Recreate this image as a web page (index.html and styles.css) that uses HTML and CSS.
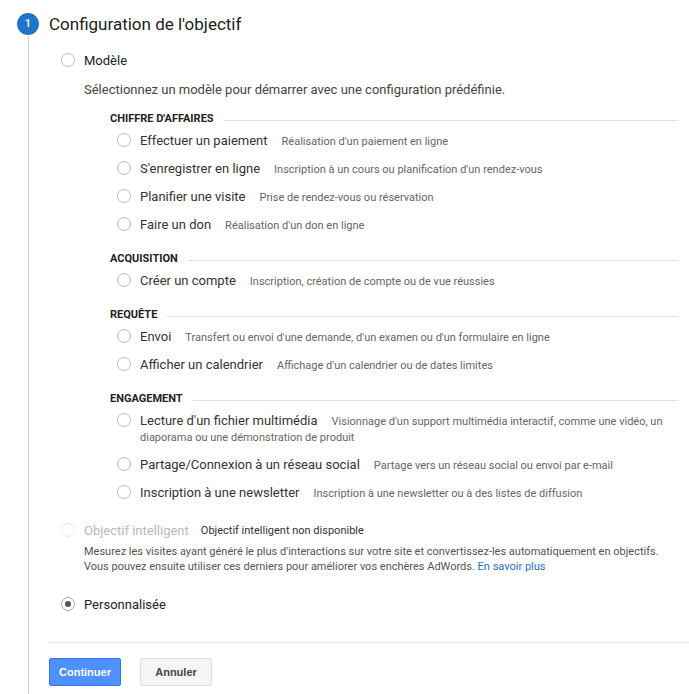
FILE: index.html
```html
<!DOCTYPE html>
<html lang="fr">
<head>
<meta charset="utf-8">
<title>Configuration de l'objectif</title>
<link rel="stylesheet" href="styles.css">
</head>
<body>
<div class="step">
  <div class="rail">
    <div class="badge">1</div>
    <div class="line"></div>
  </div>
  <div class="content">
    <h1 class="title">Configuration de l'objectif</h1>

    <div class="option top">
      <span class="radio"></span>
      <span class="opt-label">Modèle</span>
    </div>
    <p class="intro">Sélectionnez un modèle pour démarrer avec une configuration prédéfinie.</p>

    <div class="groups">
      <div class="group-head"><span>CHIFFRE D'AFFAIRES</span></div>
      <div class="item"><span class="radio"></span><p class="item-text"><span class="name">Effectuer un paiement</span><span class="desc">Réalisation d'un paiement en ligne</span></p></div>
      <div class="item"><span class="radio"></span><p class="item-text"><span class="name">S'enregistrer en ligne</span><span class="desc">Inscription à un cours ou planification d'un rendez-vous</span></p></div>
      <div class="item"><span class="radio"></span><p class="item-text"><span class="name">Planifier une visite</span><span class="desc">Prise de rendez-vous ou réservation</span></p></div>
      <div class="item"><span class="radio"></span><p class="item-text"><span class="name">Faire un don</span><span class="desc">Réalisation d'un don en ligne</span></p></div>

      <div class="group-head"><span>ACQUISITION</span></div>
      <div class="item"><span class="radio"></span><p class="item-text"><span class="name">Créer un compte</span><span class="desc">Inscription, création de compte ou de vue réussies</span></p></div>

      <div class="group-head"><span>REQUÊTE</span></div>
      <div class="item"><span class="radio"></span><p class="item-text"><span class="name">Envoi</span><span class="desc">Transfert ou envoi d'une demande, d'un examen ou d'un formulaire en ligne</span></p></div>
      <div class="item"><span class="radio"></span><p class="item-text"><span class="name">Afficher un calendrier</span><span class="desc">Affichage d'un calendrier ou de dates limites</span></p></div>

      <div class="group-head"><span>ENGAGEMENT</span></div>
      <div class="item"><span class="radio"></span><p class="item-text"><span class="name">Lecture d'un fichier multimédia</span><span class="desc">Visionnage d'un support multimédia interactif, comme une vidéo, un diaporama ou une démonstration de produit</span></p></div>
      <div class="item"><span class="radio"></span><p class="item-text"><span class="name">Partage/Connexion à un réseau social</span><span class="desc">Partage vers un réseau social ou envoi par e-mail</span></p></div>
      <div class="item"><span class="radio"></span><p class="item-text"><span class="name">Inscription à une newsletter</span><span class="desc">Inscription à une newsletter ou à des listes de diffusion</span></p></div>
    </div>

    <div class="option smart">
      <span class="radio disabled"></span>
      <span class="opt-label muted">Objectif intelligent</span>
      <span class="note">Objectif intelligent non disponible</span>
    </div>
    <p class="smart-desc">Mesurez les visites ayant généré le plus d'interactions sur votre site et convertissez-les automatiquement en objectifs. Vous pouvez ensuite utiliser ces derniers pour améliorer vos enchères AdWords. <a class="link" href="#">En savoir plus</a></p>

    <div class="option custom">
      <span class="radio checked"></span>
      <span class="opt-label">Personnalisée</span>
    </div>

    <div class="actions">
      <button class="btn primary" type="button">Continuer</button>
      <button class="btn secondary" type="button">Annuler</button>
    </div>
  </div>
</div>
</body>
</html>
```

FILE: styles.css
```css
* { box-sizing: border-box; }

html, body {
  margin: 0;
  padding: 0;
  background: #fff;
  height: 100%;
}

body {
  font-family: Roboto, "Liberation Sans", Arial, sans-serif;
  color: #333;
  overflow: hidden;
}

.step {
  display: flex;
  padding-left: 17px;
  padding-top: 13px;
  min-height: 100%;
}

.rail {
  width: 22px;
  display: flex;
  flex-direction: column;
  align-items: center;
  flex: none;
}

.badge {
  width: 22px;
  height: 22px;
  border-radius: 50%;
  background: #1f76c6;
  color: #fff;
  font-size: 11px;
  line-height: 22px;
  text-align: center;
  font-weight: 500;
}

.line {
  flex: 1;
  width: 1px;
  background: #cfcfcf;
  margin-top: 1px;
}

.content {
  flex: 1;
  margin-left: 10px;
}

.title {
  margin: 0;
  font-size: 17px;
  line-height: 22px;
  font-weight: 400;
  color: #222;
}

.option {
  display: flex;
  align-items: center;
  margin-left: 12px;
  height: 20px;
}

.option.top { margin-top: 15px; }

.radio {
  width: 14px;
  height: 14px;
  border: 1px solid #bdbdbd;
  border-radius: 50%;
  background: #fff;
  flex: none;
  position: relative;
}

.radio.disabled { border-color: #ececec; }

.radio.checked { border-color: #a8a8a8; }
.radio.checked::after {
  content: "";
  position: absolute;
  left: 3px;
  top: 3px;
  width: 6px;
  height: 6px;
  border-radius: 50%;
  background: #555;
}

.opt-label {
  margin-left: 9px;
  font-size: 13px;
  color: #222;
}

.opt-label.muted { color: #b8b8b8; }

.note {
  margin-left: 12px;
  font-size: 11px;
  color: #333;
}

.intro {
  margin: 12px 0 0 35px;
  font-size: 13px;
  line-height: 16px;
  color: #444;
}

.groups {
  margin-left: 61px;
  margin-right: 11px;
}

.group-head {
  display: flex;
  align-items: center;
  margin-top: 12px;
  height: 16px;
  font-size: 11px;
  font-weight: 700;
  color: #222;
}

.group-head::after {
  content: "";
  flex: 1;
  height: 1px;
  background: #e2e2e2;
  margin-left: 10px;
  margin-top: 5px;
}

.item {
  display: flex;
  align-items: flex-start;
  padding: 8px 0 4px 7px;
}

.item .radio { margin-top: -1px; }

.item-text {
  margin: 0 0 0 9px;
  font-size: 11px;
  line-height: 16px;
}

.name {
  font-size: 13px;
  line-height: 14px;
  color: #333;
  margin-right: 14px;
}

.desc {
  font-size: 11px;
  line-height: 14px;
  color: #666;
}

.option.smart { margin-top: 14px; }

.smart-desc {
  margin: 4px 10px 0 35px;
  font-size: 11px;
  line-height: 15px;
  color: #555;
}

.link {
  color: #1f6fc1;
  text-decoration: none;
}

.option.custom { margin-top: 20px; }

.actions {
  margin-top: 28px;
  border-top: 1px solid #e5e5e5;
  padding-top: 15px;
  display: flex;
  gap: 19px;
}

.btn {
  width: 72px;
  height: 28px;
  border-radius: 2px;
  font-family: "Liberation Sans", Arial, sans-serif;
  font-size: 11px;
  font-weight: 700;
  padding: 0;
  cursor: pointer;
}

.btn.primary {
  background: #4d90fe;
  border: 1px solid #3079ed;
  color: #fff;
}

.btn.secondary {
  background: #f5f5f5;
  border: 1px solid #dcdcdc;
  color: #444;
}
```
